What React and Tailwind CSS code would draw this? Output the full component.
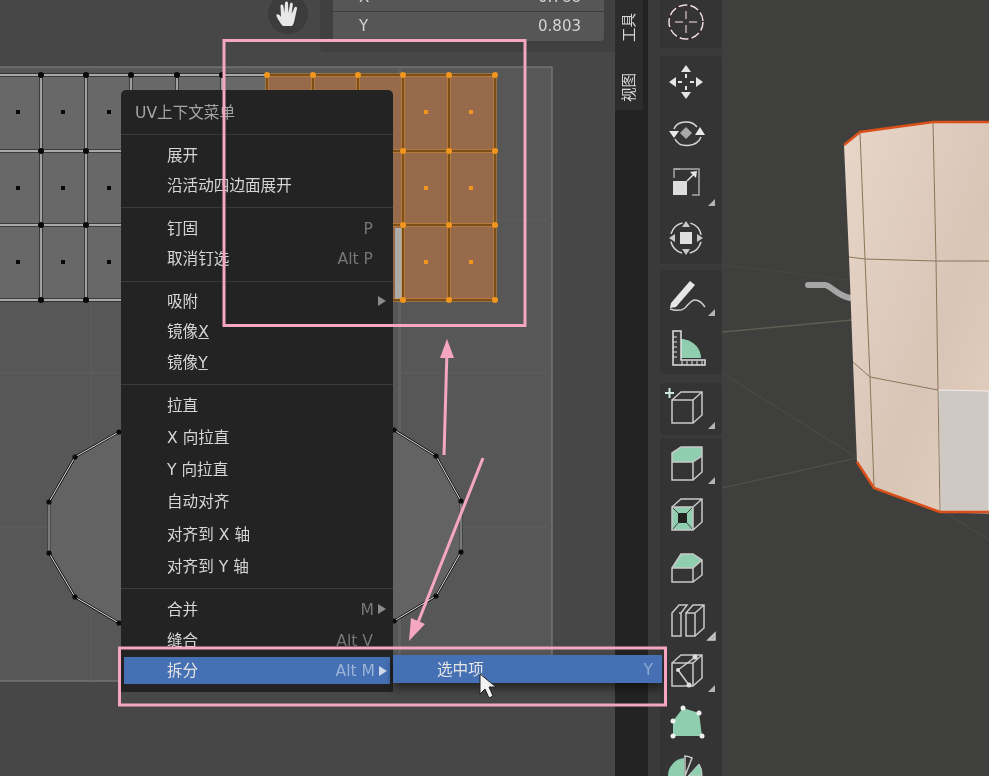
import React from "react";

const font = { fontFamily: '"DejaVu Sans","Noto Sans CJK SC",sans-serif' };
const GREEN = "#8fcfb0";
const LINE = "#c9c9c9";

const xs = [41, 86, 131, 177, 222, 267, 313, 358, 403, 449, 495];
const ys = [75, 151, 225, 300];
const centerX = [18, 63, 109, 154, 199, 244, 290, 335, 380, 426, 471];
const centerY = [112, 188, 262];
const circle = "119,432 75,457 49,502 49,553 75,597 119,623 200,640 320,640 394,621 436,596 461,552 461,501 436,456 394,430 320,410 200,410";

function UvCanvas() {
  return (
    <svg className="absolute left-0 top-0" width="615" height="776" viewBox="0 0 615 776">
      <rect x="-2" y="67" width="554" height="614" fill="#575757" stroke="#858585" />
      <g stroke="#5f5f5f">
        <path d="M91 67V681M245 67V681M399 67V681M0 220H552M0 373H552M0 527H552" />
      </g>
      <rect x="398" y="67" width="3" height="614" fill="#666" opacity="0.6" />
      <polygon points={circle} fill="#636363" stroke="#111" strokeWidth="2.5" />
      <polygon points={circle} fill="none" stroke="#e4e4e4" strokeWidth="1" />
      <rect x="0" y="75" width="267" height="225" fill="#686868" />
      <rect x="267" y="75" width="228" height="225" fill="#976a4c" />
      <rect x="395" y="228" width="8" height="72" fill="#ababab" />
      {xs.slice(0, 5).map((x) => (
        <g key={x}>
          <path d={`M${x} 75V300`} stroke="#111" strokeWidth="3" />
          <path d={`M${x} 75V300`} stroke="#eee" strokeWidth="1.3" />
        </g>
      ))}
      {ys.map((y) => (
        <g key={y}>
          <path d={`M0 ${y}H267`} stroke="#111" strokeWidth="3" />
          <path d={`M0 ${y}H267`} stroke="#ddd" strokeWidth="1.3" />
          <path d={`M267 ${y}H495`} stroke="#d98a2a" strokeWidth="3" />
          <path d={`M267 ${y}H495`} stroke="#1f1408" strokeWidth="1" />
        </g>
      ))}
      {xs.slice(5).map((x) => (
        <g key={x}>
          <path d={`M${x} 75V300`} stroke="#d98a2a" strokeWidth="3" />
          <path d={`M${x} 75V300`} stroke="#1f1408" strokeWidth="1" />
        </g>
      ))}
      {xs.map((x, i) =>
        ys.map((y) => <circle key={`${x}-${y}`} cx={x} cy={y} r="3" fill={i < 5 ? "#0a0a0a" : "#f0961e"} />)
      )}
      {centerX.map((x, i) =>
        centerY.map((y) => (
          <rect key={`${x}-${y}`} x={x - 2} y={y - 2} width="4" height="4" fill={i < 5 ? "#0a0a0a" : "#f0961e"} />
        ))
      )}
      {circle.split(" ").map((p) => {
        const [cx, cy] = p.split(",");
        return <circle key={p} cx={cx} cy={cy} r="2.6" fill="#0a0a0a" />;
      })}
    </svg>
  );
}

const menuGroups = [
  {
    cls: "pt-[5px] pb-[7px]",
    rows: [
      { label: "展开", h: "h-[30px]" },
      { label: "沿活动四边面展开", h: "h-[30px]" },
    ],
  },
  {
    cls: "pt-[5px] pb-[8px]",
    rows: [
      { label: "钉固", key: "P", h: "h-[30px]" },
      { label: "取消钉选", key: "Alt P", h: "h-[30px]" },
    ],
  },
  {
    cls: "pt-[4px] pb-[7px]",
    rows: [
      { label: "吸附", arrow: true, h: "h-[30px]" },
      { label: "镜像", u: "X", h: "h-[30px]" },
      { label: "镜像", u: "Y", h: "h-[31px]" },
    ],
  },
  {
    cls: "pt-[4px] pb-[6px]",
    rows: [
      { label: "拉直", h: "h-[32px]" },
      { label: "X 向拉直", h: "h-[32px]" },
      { label: "Y 向拉直", h: "h-[32px]" },
      { label: "自动对齐", h: "h-[32px]" },
      { label: "对齐到 X 轴", h: "h-[33px]" },
      { label: "对齐到 Y 轴", h: "h-[32px]" },
    ],
  },
];

function Tri({ cls = "border-l-[#8a8a8a]" }) {
  return <span className={`ml-[4px] inline-block h-0 w-0 border-y-[5px] border-l-[8px] border-y-transparent ${cls}`} />;
}

function Row({ r }) {
  return (
    <div className={`flex items-center pl-[46px] pr-[7px] text-[15.6px] text-[#d6d6d6] ${r.h}`}>
      <span className="flex-1 whitespace-nowrap pt-[4px]">
        {r.label}
        {r.u && <span className="underline">{r.u}</span>}
      </span>
      {r.key && <span className="pr-[13px] pt-[4px] text-[#777777]">{r.key}</span>}
      {r.arrow && <Tri />}
    </div>
  );
}

function Menu() {
  return (
    <div className="absolute left-[121px] top-[90px] w-[272px] rounded-t-[5px] bg-[#232323]" style={font}>
      <div className="flex h-[45px] items-center border-b border-[#3a3a3a] pl-[14px] text-[15.6px] text-[#a5a5a5]">
        <span className="pt-[4px]">UV上下文菜单</span>
      </div>
      {menuGroups.map((g, i) => (
        <div key={i} className={`border-b border-[#3a3a3a] ${g.cls}`}>
          {g.rows.map((r, j) => (
            <Row key={j} r={r} />
          ))}
        </div>
      ))}
      <div className="pt-[5px] pb-[8px]">
        <div className="flex h-[30px] items-center pl-[46px] pr-[7px] text-[15.6px] text-[#d6d6d6]">
          <span className="flex-1 pt-[4px]">合并</span>
          <span className="pt-[4px] text-[#777777]">M</span>
          <Tri />
        </div>
        <div className="flex h-[33px] items-center pl-[46px] pr-[20px] text-[15.6px] text-[#d6d6d6]">
          <span className="flex-1 pt-[2px]">缝合</span>
          <span className="pt-[2px] text-[#777777]">Alt V</span>
        </div>
        <div className="mx-[3px] flex h-[27px] items-center bg-[#4570b4] pl-[43px] pr-[3px] text-[15.6px] text-[#e4e4e4]">
          <span className="flex-1 pt-[2px]">拆分</span>
          <span className="pt-[2px] text-[#9db3d6]">Alt M</span>
          <Tri cls="border-l-[#cfd9ea]" />
        </div>
      </div>
      <div className="absolute left-[272px] top-[565px] flex h-[28px] w-[269px] items-center bg-[#4570b4] pl-[44px] pr-[9px] text-[15.6px] text-[#e4e4e4] shadow-[0_6px_8px_rgba(0,0,0,0.45)]">
        <span className="flex-1 pt-[3px]">选中项</span>
        <span className="pt-[3px] text-[#8fa8d0]">Y</span>
      </div>
    </div>
  );
}

function Annotations() {
  return (
    <svg className="pointer-events-none absolute left-0 top-0" width="989" height="776" viewBox="0 0 989 776">
      <g fill="none" stroke="#f4a6c2" strokeWidth="3">
        <rect x="224" y="40.5" width="301" height="285" />
        <rect x="119.5" y="648" width="546" height="57" />
        <path d="M444 455L447 350" />
        <path d="M483 458L417 625" />
      </g>
      <polygon points="447,339 440,358 454,358" fill="#f4a6c2" />
      <polygon points="409,641 411,618 425,624" fill="#f4a6c2" />
      <path d="M480 674V694L485 689L489 698L493 696L489 687L496 687Z" fill="#f2f2f2" stroke="#222" strokeWidth="1" />
    </svg>
  );
}

function HandIcon() {
  return (
    <svg width="26" height="28" viewBox="0 0 26 28">
      <path
        d="M6 24C4 20 1 17 1.5 14.5C3 13.5 5 15 6 17L5.5 6C5.5 4 8 4 8.4 6L9.3 13L10 3C10.2 1 12.8 1 13 3L13.4 13L15 4C15.4 2 18 2.5 17.8 4.5L16.6 14L19.5 7.500C20.3 6 22.500 6.800 22 8.500L19.500 20C19 23 18 25 17 26H8Z"
        fill="#e8e8e8"
      />
    </svg>
  );
}

function TopPanel() {
  return (
    <div className="absolute right-0 top-0 h-[52px] w-[295px] rounded-bl-[5px] bg-[#404040] pl-[13px] pr-[11px]" style={font}>
      <div className="h-[41px] rounded-b-[4px] bg-[#565656] text-[15px] text-[#d4d4d4]">
        <div className="flex h-[12px] items-start justify-between overflow-hidden border-b border-[#3c3c3c] pl-[26px] pr-[23px] leading-[20px]">
          <span className="-translate-y-[13px]">X</span>
          <span className="-translate-y-[13px]">0.788</span>
        </div>
        <div className="flex h-[29px] items-center justify-between pl-[26px] pr-[23px]">
          <span>Y</span>
          <span>0.803</span>
        </div>
      </div>
    </div>
  );
}

function Cube() {
  return <path d="M12 17H33V40H12ZM12 17L21 9H42V32L33 40M33 17L42 9" fill="none" stroke={LINE} strokeWidth="1.5" />;
}

const Corner = () => <polygon points="48,46 55,46 55,39" fill="#b5b5b5" />;

const icons = {
  cursor: (
    <g fill="none" strokeWidth="1.5">
      <circle cx="26" cy="26" r="17" stroke="#3a2626" strokeWidth="2" />
      <circle cx="26" cy="26" r="17" stroke="#e8e0e0" strokeDasharray="9 3" />
      <path d="M26 15V23M26 29V37M15 26H23M29 26H37" stroke="#bda9a9" />
    </g>
  ),
  move: (
    <g fill="#e4e4e4">
      <polygon points="26,9 21,16 31,16" />
      <polygon points="26,43 21,36 31,36" />
      <polygon points="9,26 16,21 16,31" />
      <polygon points="43,26 36,21 36,31" />
      <path d="M25 18h2v4h-2zM25 30h2v4h-2zM18 25h4v2h-4zM30 25h4v2h-4z" />
    </g>
  ),
  rotate: (
    <g transform="translate(0,-1)">
      <polygon points="26,20 32,26 26,32 20,26" fill="#a8a8a8" />
      <path d="M14 22C17 14 31 12 37 20M41 30C37 40 20 42 15 32" fill="none" stroke="#d8d8d8" strokeWidth="1.5" />
      <polygon points="9,24 19,24 14,31" fill="#e8e8e8" />
      <polygon points="35,28 45,28 40,20" fill="#e8e8e8" />
    </g>
  ),
  scale: (
    <g>
      <path d="M14 13V9H39V35H32" fill="none" stroke="#a8a8a8" strokeWidth="1.5" />
      <path d="M14 13V18M14 9H20" fill="none" stroke="#a8a8a8" strokeWidth="1.5" />
      <rect x="13" y="21" width="14" height="14" fill="#dedede" />
      <path d="M27 21L35 13" stroke="#e4e4e4" strokeWidth="1.5" />
      <polygon points="37,11 30,12 36,18" fill="#e4e4e4" />
      <Corner />
    </g>
  ),
  transform: (
    <g>
      <rect x="20" y="20" width="12" height="12" fill="#e0e0e0" />
      <circle cx="26" cy="26" r="15.5" fill="none" stroke="#dcdcdc" strokeWidth="1.5" strokeDasharray="16.35 8" strokeDashoffset="-4" />
      <g fill="#c9c9c9">
        <polygon points="26,9 22,15 30,15" />
        <polygon points="26,43 22,37 30,37" />
        <polygon points="9,26 15,22 15,30" />
        <polygon points="43,26 37,22 37,30" />
      </g>
    </g>
  ),
  annotate: (
    <g>
      <path d="M11 33L30 11L35 15L16 37L10 38Z" fill="#e6e6e6" />
      <path d="M10 39C16 41 21 41 25 38C29 34 31 30 35 30C40 30 43 34 45 37" fill="none" stroke="#cfcfcf" strokeWidth="1.5" />
      <Corner />
    </g>
  ),
  measure: (
    <g>
      <path d="M21 36V17C32 17 41 26 41 36Z" fill={GREEN} />
      <path d="M13 9V43H45V38H21V9Z" fill="#3a3a3a" stroke="#e0e0e0" strokeWidth="1.5" />
      <path d="M13 15h4M13 20h4M13 25h4M13 30h4M13 35h4M22 43v-4M27 43v-4M32 43v-4M37 43v-4M42 43v-4" stroke="#e0e0e0" />
    </g>
  ),
  add: (
    <g>
      <Cube />
      <path d="M5 10H14M9.500 5V15" stroke="#cfe8dc" strokeWidth="2" />
      <Corner />
    </g>
  ),
  extrude: (
    <g>
      <polygon points="12,24 33,24 42,18 42,9 21,9 12,15" fill={GREEN} />
      <path d="M12 24H33V42H12ZM33 42L42 34V18M33 24L42 18M12 24V15L21 9H42V18" fill="none" stroke={LINE} strokeWidth="1.5" />
      <Corner />
    </g>
  ),
  inset: (
    <g>
      <rect x="12" y="17" width="21" height="23" fill={GREEN} />
      <rect x="18" y="23" width="9" height="10" fill="#222" />
      <path d="M12 17L18 23M33 17L27 23M12 40L18 33M33 40L27 33" stroke="#444" />
      <Cube />
    </g>
  ),
  bevel: (
    <g>
      <polygon points="12,26 21,12 33,12 33,26" fill={GREEN} />
      <polygon points="33,12 42,18 33,26" fill={GREEN} />
      <path d="M12 26H33V40H12ZM12 26L21 12H33L42 18V33L33 40M33 26L42 18" fill="none" stroke={LINE} strokeWidth="1.5" />
    </g>
  ),
  loop: (
    <g fill="none" stroke={LINE} strokeWidth="1.5">
      <path d="M12 19V42H21V19L27 11H19L12 19ZM21 19H19" />
      <path d="M26 19H35V42H26ZM26 19L33 11H44V34L35 42M35 19L44 11" />
      <Corner />
    </g>
  ),
  knife: (
    <g>
      <Cube />
      <path d="M18 24L34 12M18 24L29 39" fill="none" stroke="#d0d0d0" strokeWidth="1.5" />
      <circle cx="18" cy="24" r="2" fill="#ddd" />
      <circle cx="35" cy="11" r="2.500" fill="#ddd" />
      <circle cx="29" cy="39" r="2.500" fill="#ddd" />
      <Corner />
    </g>
  ),
  poly: (
    <g>
      <polygon points="23,10 39,15 42,38 13,38 13,23" fill={GREEN} />
      <g fill="#efefef">
        <circle cx="23" cy="10" r="2.500" />
        <circle cx="39" cy="15" r="2.500" />
        <circle cx="13" cy="23" r="2.500" />
        <circle cx="42" cy="38" r="2.500" />
        <circle cx="13" cy="38" r="2.500" />
      </g>
    </g>
  ),
  spin: (
    <g>
      <path d="M8 26A18 18 0 0 1 24 8V26Z" fill={GREEN} />
      <path d="M25 26V6A18 18 0 0 1 32 8Z" fill="none" stroke={LINE} strokeWidth="1.5" />
      <path d="M28 26L39 14A18 18 0 0 1 42 26Z" fill={GREEN} stroke={LINE} />
    </g>
  ),
};

function Tool({ name }) {
  return (
    <svg className="block" width="60" height="52" viewBox="0 0 60 52">
      {icons[name]}
    </svg>
  );
}

function Group({ names, cls }) {
  return (
    <div className={`rounded-[4px] bg-[#343434] ${cls}`}>
      {names.map((n) => (
        <Tool key={n} name={n} />
      ))}
    </div>
  );
}

function Toolbar() {
  return (
    <div className="flex h-[776px] w-[74px] flex-col overflow-hidden bg-[#3a3a3a] pl-[12px]">
      <Group names={["cursor"]} cls="-mt-[4px] mb-[8px]" />
      <Group names={["move", "rotate", "scale", "transform"]} cls="mb-[6px]" />
      <Group names={["annotate", "measure"]} cls="mb-[9px]" />
      <Group names={["add"]} cls="mb-[3px]" />
      <Group names={["extrude", "inset", "bevel", "loop", "knife", "poly", "spin"]} cls="" />
    </div>
  );
}

function Viewport() {
  return (
    <div className="relative h-[776px] flex-1 bg-[#3f3f3e]">
      <svg className="absolute left-0 top-0" width="267" height="776" viewBox="722 0 267 776">
        <defs>
          <linearGradient id="mesh" x1="0" y1="0" x2="1" y2="1">
            <stop offset="0" stopColor="#e8d6ca" />
            <stop offset="0.6" stopColor="#d8c5b6" />
            <stop offset="1" stopColor="#e6d0c0" />
          </linearGradient>
        </defs>
        <path d="M722 332L852 320" stroke="#5c5f52" strokeWidth="1.5" />
        <path d="M722 488L857 458" stroke="#535353" />
        <path d="M722 373L989 540" stroke="#4c4c4c" />
        <path d="M722 265L850 280" stroke="#484646" />
        <path d="M808 285H825C832 286 836 295 850 298" fill="none" stroke="#a6a6a6" strokeWidth="6" strokeLinecap="round" />
        <polygon points="844,145 860,132 933,122 989,122 989,513 940,512 874,488 857,462 853,362 849,257" fill="url(#mesh)" />
        <polygon points="938,390 989,391 989,513 940,512" fill="#cfc9c3" stroke="#f4ecec" />
        <path d="M860 132L865 259L870 377L874 488M933 122L936 261L938 390L940 512M849 257L865 259L936 261H989M853 362L870 377L938 390" fill="none" stroke="#8a7658" strokeWidth="1" />
        <path d="M844 145L860 132L933 122H989" fill="none" stroke="#d9501a" strokeWidth="2.500" />
        <path d="M857 462L874 488L940 512H989" fill="none" stroke="#d9501a" strokeWidth="2.500" />
      </svg>
    </div>
  );
}

function Tabs() {
  return (
    <div className="flex h-[776px] w-[33px] flex-col bg-[#232323]" style={font}>
      <div className="flex h-[110px] w-[28px] flex-col items-center gap-[31px] bg-[#2c2c2c] pt-[13px] text-[14.5px] leading-[28px] text-[#d8d8d8]">
        <span className="rotate-180 [writing-mode:vertical-rl] [text-orientation:sideways]">工具</span>
        <span className="rotate-180 [writing-mode:vertical-rl] [text-orientation:sideways]">视图</span>
      </div>
    </div>
  );
}

export default function App() {
  return (
    <div className="relative flex h-[776px] w-[989px] overflow-hidden bg-[#474747] blur-[0.4px]">
      <div className="relative h-[776px] w-[615px] shrink-0">
        <UvCanvas />
        <TopPanel />
        <div className="absolute left-[268px] top-[-6px] flex h-[40px] w-[40px] items-center justify-center rounded-full bg-[#3c3c3c]">
          <HandIcon />
        </div>
      </div>
      <Tabs />
      <Toolbar />
      <Viewport />
      <Menu />
      <Annotations />
    </div>
  );
}
